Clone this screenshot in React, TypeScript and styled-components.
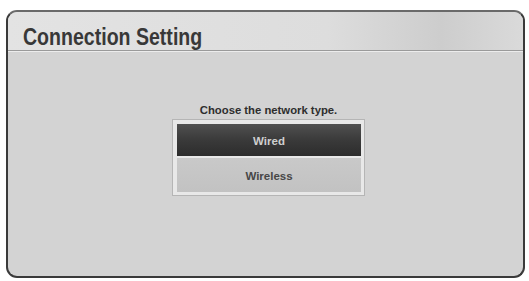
import React from "react";
import styled, { createGlobalStyle } from "styled-components";

const Global = createGlobalStyle`
  html, body { margin: 0; padding: 0; background: #ffffff; }
  body { width: 529px; height: 281px; overflow: hidden; font-family: "Liberation Sans", sans-serif; }
`;

const Frame = styled.div`
  box-sizing: border-box;
  margin: 10px 0 0 6px;
  width: 519px;
  height: 268px;
  border: 2px solid #3a3a3a;
  border-top-color: #6a6a6a;
  border-radius: 11px;
  background: #d3d3d3;
  overflow: hidden;
  display: flex;
  flex-direction: column;
`;

const Header = styled.div`
  box-sizing: border-box;
  height: 39px;
  padding: 13px 0 0 15px;
  background: linear-gradient(90deg, #e3e3e3 0%, #dddddd 62%, #cdcdcd 84%, #dadada 100%);
  border-bottom: 1px solid #9a9a9a;
  box-shadow: 0 1px 0 #ececec;
`;

const Title = styled.h1`
  display: inline-block;
  margin: 0;
  font-family: "Liberation Sans", sans-serif;
  font-weight: 700;
  font-size: 23px;
  line-height: 24px;
  color: #383838;
  transform: scaleX(0.85);
  transform-origin: left center;
`;

const Body = styled.div`
  flex: 1;
  display: flex;
  flex-direction: column;
  align-items: center;
  padding: 53px 0 0 6px;
`;

const Prompt = styled.div`
  font-family: "Liberation Sans", sans-serif;
  font-weight: 700;
  font-size: 11.3px;
  line-height: 13px;
  color: #2e2e2e;
  margin-bottom: 2px;
`;

const Box = styled.div`
  box-sizing: border-box;
  width: 193px;
  border: 1px solid #b5b5b5;
  background: #e8e8e8;
  padding: 4px 3px 3px 4px;
  display: flex;
  flex-direction: column;
  gap: 2px;
`;

const Option = styled.div<{ $active?: boolean }>`
  height: ${(p) => (p.$active ? 32 : 34)}px;
  display: flex;
  align-items: center;
  justify-content: center;
  padding-top: ${(p) => (p.$active ? 2 : 1)}px;
  box-sizing: border-box;
  font-family: "Liberation Sans", sans-serif;
  font-weight: 700;
  font-size: 11.5px;
  color: ${(p) => (p.$active ? "#cfcfcf" : "#474747")};
  background: ${(p) =>
    p.$active
      ? "linear-gradient(180deg, #505050 0%, #3a3a3a 50%, #2c2c2c 100%)"
      : "linear-gradient(180deg, #c9c9c9 0%, #c2c2c2 100%)"};
`;

export default function App() {
  return (
    <>
      <Global />
      <Frame>
        <Header>
          <Title>Connection Setting</Title>
        </Header>
        <Body>
          <Prompt>Choose the network type.</Prompt>
          <Box>
            <Option $active>Wired</Option>
            <Option>Wireless</Option>
          </Box>
        </Body>
      </Frame>
    </>
  );
}
